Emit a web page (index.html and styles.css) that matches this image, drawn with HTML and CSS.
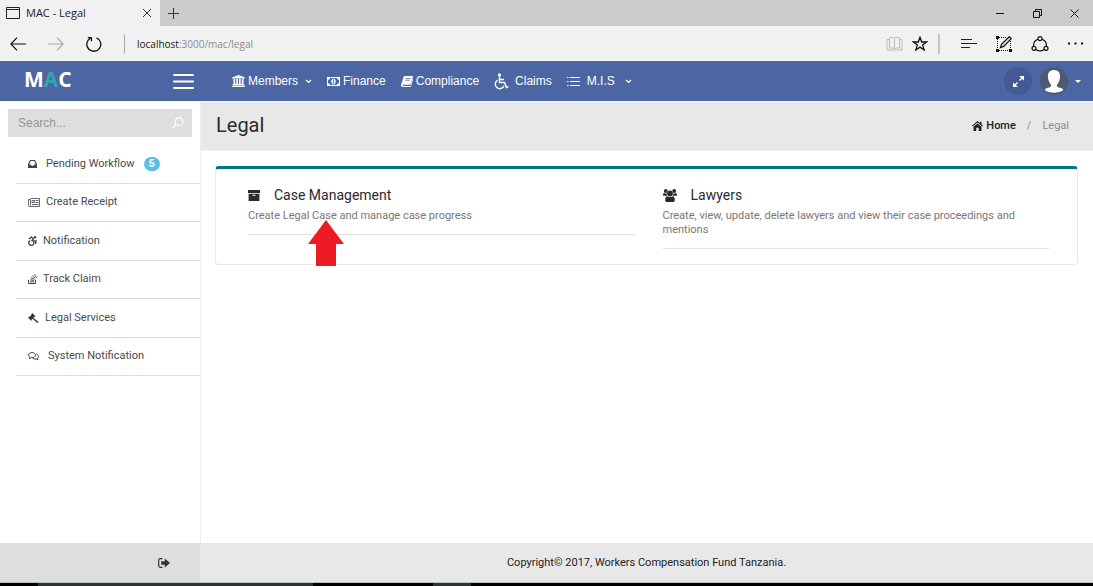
FILE: index.html
```html
<!DOCTYPE html>
<html lang="en">
<head>
<meta charset="utf-8">
<title>MAC - Legal</title>
<link rel="stylesheet" href="styles.css">
</head>
<body>
<div class="window">
  <div class="tabstrip">
    <div class="tab">
      <svg class="tab-icon" width="14" height="12" viewBox="0 0 14 12"><path d="M.5.5h13v11H.5zM.5 2.5h13" fill="none" stroke="#222"/></svg>
      <span class="tab-title">MAC - Legal</span>
      <button class="plain" aria-label="Close tab"><svg width="10" height="10" viewBox="0 0 10 10"><path d="M1 1l8 8M9 1L1 9" stroke="#333" fill="none"/></svg></button>
    </div>
    <button class="plain new-tab" aria-label="New tab"><svg width="11" height="11" viewBox="0 0 11 11"><path d="M5.500 0v11M0 5.500h11" stroke="#333" fill="none"/></svg></button>
    <div class="win-controls">
      <button class="plain" aria-label="Minimize"><svg width="9" height="9" viewBox="0 0 9 9"><path d="M0 4.500h8" stroke="#111"/></svg></button>
      <button class="plain" aria-label="Restore"><svg width="9" height="9" viewBox="0 0 9 9"><path d="M.5 2.500h6v6h-6zM2.500 2V.5h6v6H7" fill="none" stroke="#111"/></svg></button>
      <button class="plain" aria-label="Close"><svg width="9" height="9" viewBox="0 0 9 9"><path d="M.5.5l8 8M8.500.5l-8 8" stroke="#111"/></svg></button>
    </div>
  </div>
  <div class="toolbar">
    <div class="browser-nav">
      <button class="plain" aria-label="Back"><svg width="16" height="14" viewBox="0 0 16 14"><path d="M7 .7L.9 7 7 13.300M1 7h15" fill="none" stroke="#111" stroke-width="1.200"/></svg></button>
      <button class="plain" aria-label="Forward"><svg width="16" height="14" viewBox="0 0 16 14"><path d="M9 .7L15.100 7 9 13.300M15 7H0" fill="none" stroke="#aaa" stroke-width="1.200"/></svg></button>
      <button class="plain" aria-label="Refresh"><svg width="16" height="16" viewBox="0 0 16 16"><path d="M10.500 1.800A7 7 0 1 1 4.300 2.200M1.800 1.600h3.600v3.600" fill="none" stroke="#111" stroke-width="1.300"/></svg></button>
    </div>
    <div class="address"><span class="host">localhost</span>:3000/mac/legal</div>
    <div class="browser-tools">
      <button class="plain" aria-label="Reading view"><svg width="17" height="15" viewBox="0 0 17 15"><path d="M3.500 1.500h3.500l1.500 1 1.500-1h3.500v10.500h-3.500l-1.500 1-1.500-1H3.500zM8.500 2.500v10.500M3 3.500H1v10.500h6.500l1 .5 1-.5H16V3.500h-2" fill="none" stroke="#bcbcbc"/></svg></button>
      <button class="plain" aria-label="Favorites"><svg width="16" height="15" viewBox="0 0 16 15"><path d="M8 1.200l1.700 4.800h5l-4 3.100 1.500 4.900L8 11.100 3.800 14l1.500-4.900-4-3.100h5z" fill="none" stroke="#111" stroke-width="1.300"/></svg></button>
      <span class="tool-sep"></span>
      <button class="plain" aria-label="Hub"><svg width="16" height="11" viewBox="0 0 16 11"><path d="M0 1.500h11M0 5.500h16M0 9.500h9" stroke="#222" stroke-width="1.200"/></svg></button>
      <button class="plain" aria-label="Make a web note"><svg width="16" height="16" viewBox="0 0 16 16"><path d="M3 1.500h8M1.500 3v10M3 14.500h10M14.500 5v8" fill="none" stroke="#111" stroke-dasharray="1 1"/><path d="M0 0h3v3H0zM0 13h3v3H0zM13 13h3v3h-3z" fill="#111"/><path d="M4.500 11.500l1-3.200 7.700-7.600 2.100 2L7.700 10.400z" fill="#ddd" stroke="#111" stroke-width="1.200"/></svg></button>
      <button class="plain" aria-label="Share"><svg width="18" height="16" viewBox="0 0 18 16"><g fill="none" stroke="#111" stroke-width="1.200"><circle cx="9" cy="2.700" r="2"/><circle cx="3" cy="12.300" r="2"/><circle cx="15" cy="12.300" r="2"/><path d="M7 3.200C3.500 4.400 2.400 7 2.600 10.300M11 3.200c3.500 1.200 4.600 3.800 4.400 7.100M4.900 13.400c2.700 2 5.500 2 8.200 0"/></g></svg></button>
      <button class="plain" aria-label="More"><svg width="15" height="3" viewBox="0 0 15 3"><path d="M0 .5h2v2H0zM6.500.5h2v2h-2zM13 .5h2v2h-2z" fill="#111"/></svg></button>
    </div>
  </div>

  <header class="topbar">
    <div class="brand">
      <a class="logo" href="#">M<span class="logo-a">A</span>C</a>
      <button class="plain" aria-label="Toggle menu"><svg width="21" height="16" viewBox="0 0 21 16"><path d="M1 2h19M1 8.500h19M1 15h19" stroke="#fff" stroke-width="2" stroke-linecap="round"/></svg></button>
    </div>
    <nav class="main-nav">
      <a href="#"><svg width="13" height="12" viewBox="0 0 13 12"><path d="M6.500 0L13 2.500v1H0v-1zM1.500 4h1.700v5H1.500zM4.300 4H6v5H4.300zM7 4h1.700v5H7zM9.800 4h1.700v5H9.800zM.8 9h11.400v1.200H.8zM0 10.700h13V12H0z" fill="#fff"/></svg>Members<svg class="caret" width="7" height="5" viewBox="0 0 7 5"><path d="M1 1l2.500 2.500L6 1" fill="none" stroke="#fff" stroke-width="1.200"/></svg></a>
      <a href="#"><svg width="13" height="9" viewBox="0 0 13 9"><path d="M0 0h13v9H0z" fill="#fff"/><path d="M3 1h7c0 1 .8 1.800 2 1.800v3.400C10.800 6.200 10 7 10 8H3c0-1-.8-1.800-2-1.800V2.800C2.200 2.800 3 2 3 1z" fill="#4b66a3"/><ellipse cx="6.500" cy="4.500" rx="2.200" ry="2.900" fill="#fff"/><path d="M5.800 3l.8-.5v3.300M5.500 6h2" fill="none" stroke="#4b66a3" stroke-width=".9"/></svg>Finance</a>
      <a href="#"><svg width="12" height="11" viewBox="0 0 12 11"><path d="M4 0h7.200c.6 0 .9.500.7 1L9.700 8c-.2.500-.6.800-1.100.8H2c-.7 0-.6 1.200.2 1.200h7.200L11.600 3c.5.200.5.700.3 1.200L10 10.200c-.1.500-.5.800-1 .8H2C.5 11-.2 9.800.1 8.700L2.500 1.200C2.700.5 3.300 0 4 0z" fill="#fff"/><path d="M4.800 2.400h4.700M4.200 4.200h4.700" stroke="#4b66a3" stroke-width=".8"/></svg>Compliance</a>
      <a class="wide-icon" href="#"><svg width="15" height="17" viewBox="0 0 15 17"><circle cx="5.500" cy="1.900" r="1.600" fill="#fff"/><path d="M5.500 3.500v6h5l2 5 2-.8M6 6.500h4M3.700 7.200a4.500 4.500 0 1 0 6.300 5.600" fill="none" stroke="#fff" stroke-width="1.400"/></svg>Claims</a>
      <a class="wide-icon" href="#"><svg width="14" height="11" viewBox="0 0 14 11"><path d="M0 1.500h1.500M3 1.500h10M0 5.500h1.500M3 5.500h10M0 9.500h1.500M3 9.500h10" stroke="#fff"/></svg>M.I.S<svg class="caret" width="7" height="5" viewBox="0 0 7 5"><path d="M1 1l2.500 2.500L6 1" fill="none" stroke="#fff" stroke-width="1.200"/></svg></a>
    </nav>
    <div class="user-tools">
      <button class="plain round" aria-label="Full screen"><svg width="11" height="11" viewBox="0 0 11 11"><path d="M6.200 0H11v4.800zM0 6.200V11h4.800z" fill="#fff"/><path d="M9.500 1.500L6.500 4.500M4.500 6.500l-3 3" stroke="#fff" stroke-width="1.400"/></svg></button>
      <button class="plain user" aria-label="Account"><svg width="28" height="28" viewBox="0 0 28 28"><circle cx="14" cy="14" r="14" fill="#4d5a72"/><path d="M14 3c-4 0-6.300 2.800-6.100 6.500.1 3.800 1.500 6.300 3.200 8.200.3 2.600-1.700 2.600-4 3.300-1.500.5-2.200 1-2.300 2 4.500 3.500 13.900 3.500 18.400 0-.1-1-.8-1.500-2.300-2-2.300-.7-4.300-.7-4-3.300 1.700-1.900 3.100-4.400 3.200-8.200C20.300 5.800 18 3 14 3z" fill="#fff"/></svg><svg width="6" height="3" viewBox="0 0 6 3"><path d="M0 0h6L3 3z" fill="#fff"/></svg></button>
    </div>
  </header>

  <div class="body">
    <aside class="sidebar">
      <form class="search">
        <input type="search" placeholder="Search..." aria-label="Search">
        <button class="plain" aria-label="Search"><svg width="12" height="12" viewBox="0 0 12 12"><circle cx="7" cy="4.800" r="3.900" fill="none" stroke="#fff" stroke-width="1.200"/><path d="M4 7.600L.8 11" stroke="#fff" stroke-width="1.400"/></svg></button>
      </form>
      <nav class="menu">
        <a href="#"><svg width="9" height="8" viewBox="0 0 9 8"><path fill-rule="evenodd" d="M2 0h5l2 4.300V8H0V4.300zM2.700 1L1.300 4.600h1.600l.6 1.200h2l.6-1.200h1.600L6.300 1z" fill="#444"/></svg><span class="after-mid">Pending Workflow</span><span class="badge">5</span></a>
        <a href="#"><svg width="12" height="9" viewBox="0 0 12 9"><path d="M2.500.5h9v8H1.500c-.6 0-1-.3-1-1V1.500h2v6" fill="none" stroke="#666"/><path d="M4 2.500h2.500v2H4zM7.500 2.500h3M7.500 4.500h3M4 6.500h6.500" fill="none" stroke="#666"/></svg><span class="after-small">Create Receipt</span></a>
        <a href="#"><svg width="9" height="10" viewBox="0 0 9 10"><circle cx="7" cy="1.200" r="1.200" fill="#444"/><path d="M1 3l2.200-1.800 2.200 1.200L4 4.600l4 .2-.4 3M2 4.600a2.600 2.600 0 1 0 3.800 3.200c.4-1.100.1-2-.5-2.600" fill="none" stroke="#444" stroke-width="1.400"/></svg><span class="after-small">Notification</span></a>
        <a href="#"><svg width="9" height="10" viewBox="0 0 9 10"><path d="M.5 6v3.500h7V6M2 7.800h4M2.200 5.800l4 .6M2.800 3.600l3.700 1.700M4.300 1.700l3 2.700M6.500.4l2 3.200" fill="none" stroke="#444"/></svg><span class="after-small">Track Claim</span></a>
        <a href="#"><svg width="11" height="10" viewBox="0 0 11 10"><path d="M4.200 0l3.300 3.300-.7.7-.5-.2-1 1L10.500 9 9.300 10 4.500 5.700 3.600 6.500l.2.700-.6.600L0 4.500l.6-.6.700.2L3.700 1.500 3.500.7z" fill="#333"/></svg><span class="after-small">Legal Services</span></a>
        <a href="#"><svg width="11" height="9" viewBox="0 0 11 9"><path d="M4 .6c2 0 3.500 1.100 3.500 2.500S6 5.600 4 5.600l-.8-.1L1.500 6.600l.3-1.700C1 4.500.5 3.800.5 3.100.5 1.700 2 .6 4 .6zM8.400 1.900c2 .6 2.900 2.800 1.100 4.300l.5 1.700-1.900-1c-1.400.3-2.700 0-3.500-.6" fill="none" stroke="#444"/></svg><span class="after-mid">System Notification</span></a>
      </nav>
    </aside>
    <main class="content">
      <div class="page-head">
        <h1>Legal</h1>
        <nav class="crumbs" aria-label="Breadcrumb"><a href="#"><svg width="11" height="10" viewBox="0 0 11 10"><path d="M5.500 0L8 2V.8h1.500v2.500L11 4.800l-.7.7L5.500 1.600.7 5.500 0 4.800zM5.500 2.500l4 3.300V10H6.700V6.800H4.300V10H1.500V5.800z" fill="#222"/></svg>Home</a><span>/</span><span>Legal</span></nav>
      </div>
      <section class="card">
        <article class="entry">
          <h2><svg width="12" height="11" viewBox="0 0 12 11"><path fill-rule="evenodd" d="M0 0h12v3H0zM.6 3.800h10.800V11H.6zM4.500 4.800v1h3v-1z" fill="#2b2b2b"/></svg><a href="#">Case Management</a></h2>
          <p>Create Legal Case and manage case progress</p>
        </article>
        <article class="entry">
          <h2><svg width="14" height="13" viewBox="0 0 14 13"><g fill="#2b2b2b"><circle cx="2.800" cy="2" r="1.900"/><circle cx="11.200" cy="2" r="1.900"/><circle cx="7" cy="4.500" r="2.900"/><path d="M0 6.800C0 4.700.5 4 1.300 4c.8.500 1.500.6 2.300.4 0 1 .2 1.700.7 2.400zM14 6.800c0-2.100-.5-2.800-1.300-2.800-.8.500-1.500.6-2.300.4 0 1-.2 1.700-.7 2.400zM2.200 11.200c0-2.600.7-4 2.100-4 1.700 1.200 3.700 1.200 5.400 0 1.400 0 2.100 1.400 2.100 4 0 1.200-.7 1.800-1.800 1.800H4c-1.100 0-1.800-.6-1.800-1.800z"/></g></svg><a href="#">Lawyers</a></h2>
          <p>Create, view, update, delete lawyers and view their case proceedings and mentions</p>
        </article>
        <svg class="pointer" width="36" height="46" viewBox="0 0 36 46"><path d="M18 0l18 24h-8v22H8V24H0z" fill="#ed1c24"/></svg>
      </section>
    </main>
  </div>

  <footer class="footer">
    <div class="footer-side"><button class="plain" aria-label="Log out"><svg width="12" height="10" viewBox="0 0 12 10"><path d="M4.500.7H2.200C1.200.7.700 1.300.7 2.200v5.600c0 .9.500 1.500 1.500 1.500h2.300" fill="none" stroke="#333" stroke-width="1.200"/><path d="M3.200 3.200h3.600V.5L12 5 6.800 9.500V6.800H3.200z" fill="#333"/></svg></button></div>
    <div class="copyright">Copyright© 2017, Workers Compensation Fund Tanzania.</div>
  </footer>
  <div class="taskbar"><span class="task-wide"></span><span class="task-small"></span></div>
</div>
</body>
</html>
```
FILE: styles.css
```css
* { box-sizing: border-box; }
body { margin: 0; background: #fff; color: #333; font: 11px/16px Roboto, "Liberation Sans", sans-serif; }
a { color: inherit; text-decoration: none; }
svg { display: block; flex: none; }
.plain { display: flex; align-items: center; padding: 0; border: 0; background: none; }
.window { display: flex; flex-direction: column; min-height: 100vh; }

.tabstrip { display: flex; align-items: center; height: 26px; background: #cbcbcb; }
.tab { display: flex; align-items: center; gap: 6px; width: 160px; height: 26px; padding: 0 8px 0 6px; background: #f1f1f1; color: #222; font: 11px/16px "Open Sans", sans-serif; }
.tab-title { flex: 1; }
.new-tab { margin-left: 8px; }
.win-controls { display: flex; gap: 28px; margin-left: auto; padding-right: 14px; }

.toolbar { display: flex; align-items: center; height: 35px; background: #f1f1f1; }
.browser-nav { display: flex; align-items: center; gap: 22px; padding-left: 10px; }
.address { flex: 1; margin-left: 22px; padding-left: 12px; border-left: 1px solid #aaa; color: #8c8c8c; font: 10px/20px "Open Sans", sans-serif; }
.host { color: #222; }
.browser-tools { display: flex; align-items: center; gap: 19px; padding-right: 10px; }
.browser-tools button:first-child { margin-right: -10px; }
.tool-sep { width: 2px; height: 20px; margin: 0 2px 0 -9px; background: #c4c4c4; }

.topbar { display: flex; align-items: center; height: 40px; background: #4b66a3; color: #fff; }
.brand { display: flex; align-items: center; justify-content: space-between; width: 200px; padding: 0 6px 0 24px; }
.logo { padding-bottom: 4px; font: 700 21px/32px "Open Sans", sans-serif; }
.logo-a { color: #30a6b0; }
.main-nav { display: flex; flex: 1; gap: 15px; padding-left: 32px; font: 12px/16px "Liberation Sans", sans-serif; }
.main-nav a { display: flex; align-items: center; gap: 3px; }
.main-nav .wide-icon { gap: 6px; }
.caret { margin-left: 4px; }
.user-tools { display: flex; align-items: center; gap: 8px; padding-right: 12px; }
.round { justify-content: center; width: 28px; height: 28px; border-radius: 50%; background: #435a92; }
.user { gap: 7px; }

.body { display: flex; flex: 1; }
.sidebar { width: 200px; }
.search { display: flex; align-items: center; height: 28px; margin: 8px 8px 0; padding: 0 8px 0 10px; background: #dedede; }
.search input { flex: 1; min-width: 0; padding: 0; border: 0; outline: 0; background: none; font: 12px/16px "Liberation Sans", sans-serif; }
.search input::placeholder { color: #999; opacity: 1; }
.menu { display: grid; grid-auto-rows: 1fr; height: 231px; margin: 8px 0 0 16px; color: #4a4a4a; }
.menu a { display: flex; align-items: center; padding-left: 12px; border-bottom: 1px solid #dcdce4; }
.after-small { margin-left: 6px; }
.after-mid { margin-left: 9px; }
.badge { margin-left: 9px; padding: 0 5px; border-radius: 8px; background: #5bc0de; color: #fff; font-weight: 700; line-height: 14px; }

.content { flex: 1; min-width: 0; border-left: 1px solid #eee; }
.page-head { display: flex; align-items: center; justify-content: space-between; height: 50px; padding: 0 24px 2px 15px; border-top: 1px solid #f6f6f6; border-bottom: 1px solid #efefef; background: #e8e8e8; }
h1 { margin: 0; color: #2b2b2b; font-size: 20px; font-weight: 400; line-height: 24px; }
.crumbs { display: flex; gap: 8px; padding-top: 2px; color: #8a8f94; }
.crumbs span { margin-left: 3px; }
.crumbs a { display: flex; align-items: center; gap: 3px; color: #222; font-weight: 500; }

.card { position: relative; display: grid; grid-template-columns: 1fr 1fr; align-items: start; gap: 28px; margin: 15px 15px 0 14px; padding: 16px 28px 15px 32px; border: 1px solid #e8e8e8; border-top: 3px solid #007880; border-radius: 4px; }
.entry { border-bottom: 1px solid #e0e0e8; padding-bottom: 11px; }
h2 { display: flex; align-items: center; gap: 14px; margin: 0; color: #2b2b2b; font-size: 14px; font-weight: 400; line-height: 20px; }
.entry p { margin: 4px 0 0; color: #777; line-height: 14px; }
.pointer { position: absolute; left: 92px; top: 51px; }

.footer { display: flex; height: 39px; color: #222; }
.footer-side { display: flex; align-items: center; justify-content: flex-end; width: 200px; padding-right: 30px; background: #dedede; }
.copyright { flex: 1; background: #e8e8e8; text-align: center; line-height: 40px; }
.taskbar { display: flex; gap: 120px; height: 4px; padding-left: 38px; border-top: 1px solid #b8c4bf; background: #000; }
.task-wide { width: 275px; background: #303333; }
.task-small { width: 38px; background: #303333; }
```
